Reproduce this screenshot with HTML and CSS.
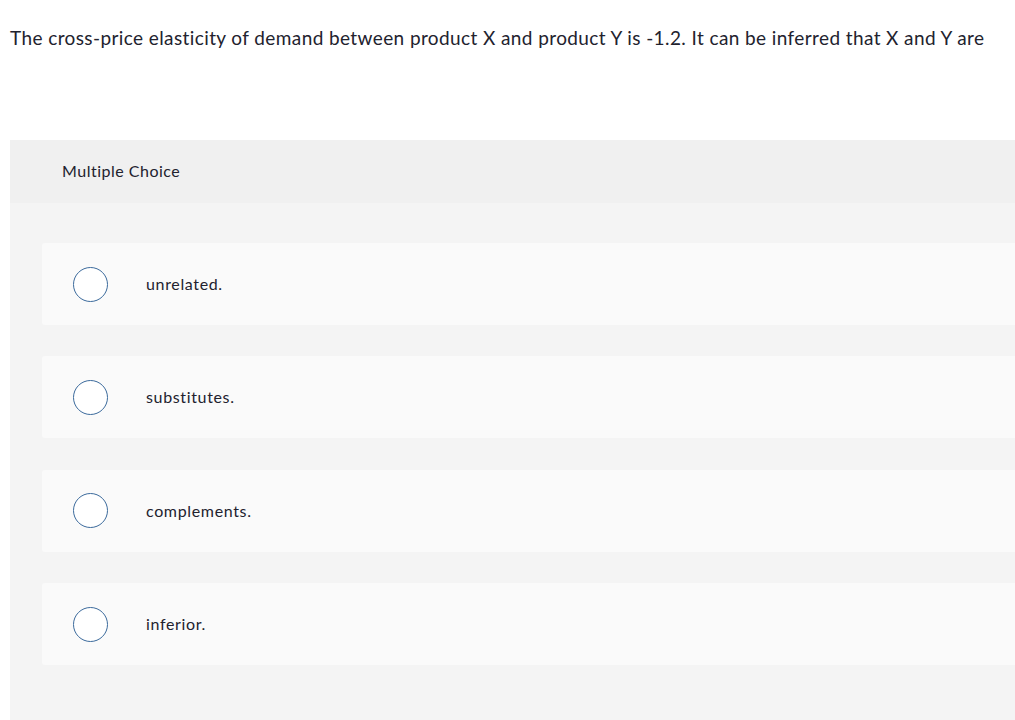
FILE: index.html
```html
<!DOCTYPE html>
<html>
<head>
<meta charset="utf-8">
<link rel="stylesheet" href="styles.css">
</head>
<body>
<div class="page">
  <p class="question">The cross-price elasticity of demand between product X and product Y is -1.2. It can be inferred that X and Y are</p>
  <div class="panel">
    <div class="panel-head">Multiple Choice</div>
    <div class="options">
      <div class="option"><span class="radio"></span><span class="label">unrelated.</span></div>
      <div class="option"><span class="radio"></span><span class="label">substitutes.</span></div>
      <div class="option"><span class="radio"></span><span class="label">complements.</span></div>
      <div class="option"><span class="radio"></span><span class="label">inferior.</span></div>
    </div>
  </div>
</div>
</body>
</html>
```
FILE: styles.css
```css
html, body {
  margin: 0;
  padding: 0;
  background: #ffffff;
  overflow: hidden;
}
.page {
  font-family: Lato, "Open Sans", sans-serif;
  color: #22222e;
  width: 1015px;
  box-sizing: border-box;
  padding-left: 10px;
}
.question {
  margin: 0;
  padding-top: 26px;
  font-size: 19px;
  line-height: 24px;
  letter-spacing: 0.4px;
  white-space: nowrap;
  height: 114px;
}
.panel {
  background: #f4f4f4;
  height: 580px;
}
.panel-head {
  background: #f0f0f0;
  height: 63px;
  box-sizing: border-box;
  padding: 21px 0 0 52px;
  font-size: 16px;
  line-height: 20px;
  letter-spacing: 0.5px;
}
.options {
  padding: 40px 0 0 32px;
  display: flex;
  flex-direction: column;
  gap: 31.4px;
}
.option {
  background: #fafafa;
  border-radius: 3px 0 0 3px;
  height: 82px;
  display: flex;
  align-items: center;
  padding-left: 30.5px;
}
.radio {
  width: 33px;
  height: 33px;
  border: 1.5px solid #3b6a9c;
  border-radius: 50%;
  background: #ffffff;
  flex: none;
}
.label {
  margin-left: 38.5px;
  font-size: 16px;
  line-height: 20px;
  letter-spacing: 0.65px;
}
```
